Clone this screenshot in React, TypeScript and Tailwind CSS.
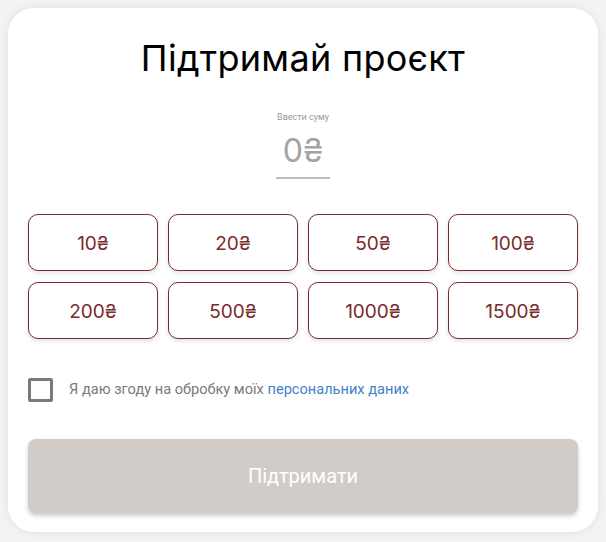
import React from "react";

const amounts = ["10₴", "20₴", "50₴", "100₴", "200₴", "500₴", "1000₴", "1500₴"];

const App = () => {
  return (
    <div className="w-[606px] h-[542px] bg-[#f3f3f3] p-2 font-['Inter',sans-serif]">
      <div className="bg-white rounded-[26px] h-[524px] px-5 pt-[26px] shadow-[0_0_10px_rgba(0,0,0,0.08)]">
        <h1 className="text-center text-[36px] leading-[48px] text-black tracking-[0.3px]">
          Підтримай проєкт
        </h1>
        <div className="flex flex-col items-center mt-[29px]">
          <label className="text-[9px] leading-[12px] text-[#999] font-['Roboto',sans-serif]">
            Ввести суму
          </label>
          <div className="mt-[7px] w-[54px] border-b-2 border-[#bdbdbd] text-center text-[32px] leading-[42px] text-[#a3a3a3] pb-[5px]">
            0₴
          </div>
        </div>
        <div className="grid grid-cols-4 gap-x-[10px] gap-y-[11px] mt-[35px]">
          {amounts.map((a) => (
            <button
              key={a}
              className="h-[57px] rounded-[10px] border border-[#7a2b2b] bg-white font-['Inter',sans-serif] text-[19px] leading-[24px] pt-[2px] text-[#7a2b2b] shadow-[0_2px_4px_rgba(0,0,0,0.12)]"
            >
              {a}
            </button>
          ))}
        </div>
        <div className="flex items-center mt-[39px] h-[24px]">
          <div className="w-[25px] h-[24px] border-[3px] border-[#7a7a7a] rounded-[2px]" />
          <span className="ml-4 text-[14.6px] text-[#7a7a7a] font-['Roboto',sans-serif]">
            Я даю згоду на обробку моїх{" "}
            <a className="text-[#3f83c6]">персональних даних</a>
          </span>
        </div>
        <button className="mt-[37px] w-full h-[74px] rounded-[8px] bg-[#d1ccc8] text-white text-[20px] font-['Roboto',sans-serif] shadow-[0_3px_4px_rgba(0,0,0,0.2)]">
          Підтримати
        </button>
      </div>
    </div>
  );
};

export default App;
